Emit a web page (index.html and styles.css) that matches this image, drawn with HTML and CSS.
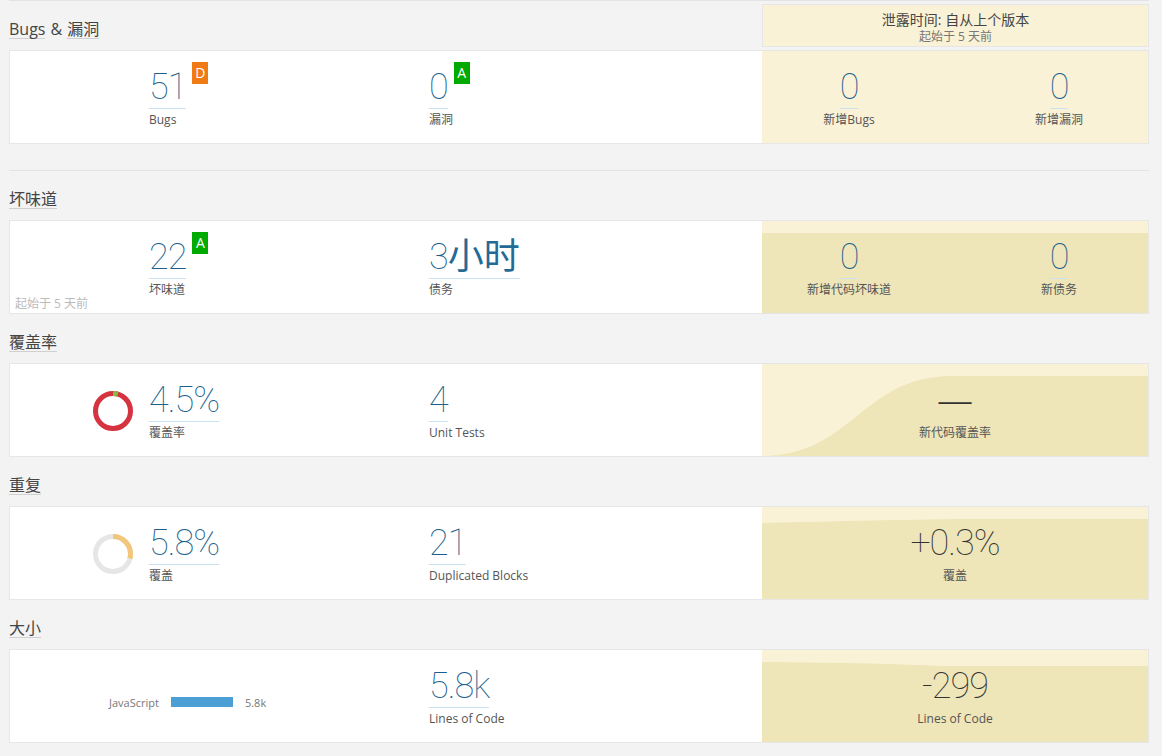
FILE: index.html
```html
<!DOCTYPE html>
<html lang="zh">
<head>
<meta charset="utf-8">
<title>Overview</title>
<link rel="stylesheet" href="styles.css">
</head>
<body>
<div class="page">

  <section class="domain">
    <div class="domain-header">
      <h2 class="domain-title"><a class="title-link">Bugs</a><span class="amp">&amp;</span><a class="title-link">漏洞</a></h2>
      <div class="leak-period">
        <div class="leak-title">泄露时间: 自从上个版本</div>
        <div class="leak-date">起始于 5 天前</div>
      </div>
    </div>
    <div class="card">
      <div class="card-main">
        <div class="chart-cell"></div>
        <div class="measure">
          <div class="value-row"><a class="value">51</a><span class="rating rating-d">D</span></div>
          <div class="label">Bugs</div>
        </div>
        <div class="measure">
          <div class="value-row"><a class="value">0</a><span class="rating rating-a">A</span></div>
          <div class="label">漏洞</div>
        </div>
      </div>
      <div class="card-leak">
        <div class="measure">
          <a class="value">0</a>
          <div class="label">新增Bugs</div>
        </div>
        <div class="measure">
          <a class="value">0</a>
          <div class="label">新增漏洞</div>
        </div>
      </div>
    </div>
  </section>

  <hr class="divider">

  <section class="domain">
    <h2 class="domain-title"><a class="title-link">坏味道</a></h2>
    <div class="card">
      <div class="card-main">
        <div class="chart-cell"></div>
        <div class="measure">
          <div class="value-row"><a class="value">22</a><span class="rating rating-a">A</span></div>
          <div class="label">坏味道</div>
        </div>
        <div class="measure">
          <div class="value-row"><a class="value">3<span class="cjk">小时</span></a></div>
          <div class="label">债务</div>
        </div>
      </div>
      <div class="card-leak">
        <svg class="leak-bg" viewBox="0 0 386 92" preserveAspectRatio="none"><path d="M0 12H386V92H0Z" fill="#eee5b9"/></svg>
        <div class="measure">
          <a class="value">0</a>
          <div class="label">新增代码坏味道</div>
        </div>
        <div class="measure">
          <a class="value">0</a>
          <div class="label">新债务</div>
        </div>
      </div>
      <div class="card-note">起始于 5 天前</div>
    </div>
  </section>

  <section class="domain spaced">
    <h2 class="domain-title"><a class="title-link">覆盖率</a></h2>
    <div class="card">
      <div class="card-main">
        <div class="chart-cell">
          <svg width="40" height="40" viewBox="0 0 40 40"><circle cx="20" cy="20" r="17.5" fill="none" stroke="#d4333f" stroke-width="5"/><circle cx="20" cy="20" r="17.5" fill="none" stroke="#85bb43" stroke-width="5" stroke-dasharray="4.95 110" transform="rotate(-90 20 20)"/></svg>
        </div>
        <div class="measure">
          <div class="value-row"><a class="value">4.5%</a></div>
          <div class="label">覆盖率</div>
        </div>
        <div class="measure">
          <div class="value-row"><a class="value">4</a></div>
          <div class="label">Unit Tests</div>
        </div>
      </div>
      <div class="card-leak single">
        <svg class="leak-bg" viewBox="0 0 386 92" preserveAspectRatio="none"><path d="M0 92C90 92 100 12 190 12H386V92Z" fill="#eee5b9"/></svg>
        <div class="measure">
          <span class="value plain dash">—</span>
          <div class="label">新代码覆盖率</div>
        </div>
      </div>
    </div>
  </section>

  <section class="domain spaced">
    <h2 class="domain-title"><a class="title-link">重复</a></h2>
    <div class="card">
      <div class="card-main">
        <div class="chart-cell">
          <svg width="40" height="40" viewBox="0 0 40 40"><circle cx="20" cy="20" r="17.5" fill="none" stroke="#e6e6e6" stroke-width="5"/><circle cx="20" cy="20" r="17.5" fill="none" stroke="#f2c77c" stroke-width="5" stroke-dasharray="31.9 110" transform="rotate(-90 20 20)"/></svg>
        </div>
        <div class="measure">
          <div class="value-row"><a class="value">5.8%</a></div>
          <div class="label">覆盖</div>
        </div>
        <div class="measure">
          <div class="value-row"><a class="value">21</a></div>
          <div class="label">Duplicated Blocks</div>
        </div>
      </div>
      <div class="card-leak single">
        <svg class="leak-bg" viewBox="0 0 386 92" preserveAspectRatio="none"><path d="M0 16Q120 13 200 12H386V92H0Z" fill="#eee5b9"/></svg>
        <div class="measure">
          <span class="value plain">+0.3%</span>
          <div class="label">覆盖</div>
        </div>
      </div>
    </div>
  </section>

  <section class="domain spaced">
    <h2 class="domain-title"><a class="title-link">大小</a></h2>
    <div class="card">
      <div class="card-main">
        <div class="lang-cell">
          <span class="lang-name">JavaScript</span>
          <span class="lang-bar" style="width:62px"></span>
          <span class="lang-value">5.8k</span>
        </div>
        <div class="measure">
          <div class="value-row"><a class="value">5.8k</a></div>
          <div class="label">Lines of Code</div>
        </div>
      </div>
      <div class="card-leak single">
        <svg class="leak-bg" viewBox="0 0 386 92" preserveAspectRatio="none"><path d="M0 12Q120 13 180 16H386V92H0Z" fill="#eee5b9"/></svg>
        <div class="measure">
          <span class="value plain">-299</span>
          <div class="label">Lines of Code</div>
        </div>
      </div>
    </div>
  </section>

</div>
</body>
</html>
```
FILE: styles.css
```css
* {
  box-sizing: border-box;
}

html,
body {
  margin: 0;
  padding: 0;
}

body {
  background: #f3f3f3;
  font-family: "Open Sans", "Noto Sans CJK SC", sans-serif;
  font-size: 12px;
  color: #444;
}

.page {
  width: 1140px;
  margin-left: 9px;
  border-top: 1px solid #e3e3e3;
}

.domain.spaced {
  margin-top: 19px;
}

.domain-header {
  display: flex;
  justify-content: space-between;
  align-items: flex-start;
  height: 49px;
}

.domain-header .domain-title {
  margin-top: 19px;
}

.domain-title {
  display: flex;
  align-items: flex-start;
  margin: 0 0 11px;
  font-size: 16px;
  font-weight: 400;
  line-height: 18px;
  color: #444;
}

.title-link {
  display: block;
  color: #444;
  text-decoration: none;
  border-bottom: 1px solid #d0d0d0;
}

.amp {
  padding: 0 5px;
}

.leak-period {
  width: 387px;
  height: 43px;
  margin-top: 3px;
  padding-top: 6px;
  border: 1px solid #e6e6e6;
  background: #faf2d6;
  text-align: center;
}

.leak-title {
  font-size: 14px;
  line-height: 17px;
  color: #444;
}

.leak-date {
  font-size: 12px;
  line-height: 17px;
  color: #777;
}

.divider {
  height: 0;
  margin: 26px 0 19px;
  border: 0;
  border-top: 1px solid #e3e3e3;
}

.card {
  position: relative;
  display: flex;
  height: 94px;
  border: 1px solid #e6e6e6;
  background: #fff;
}

.card-main {
  flex: none;
  width: 752px;
  display: grid;
  grid-template-columns: 139px 280px 1fr;
  padding: 16px 0 15px;
}

.chart-cell {
  display: flex;
  align-items: center;
  justify-content: flex-end;
  padding-right: 16px;
}

.chart-cell svg {
  display: block;
}

.lang-cell {
  grid-column: 1 / 3;
  display: flex;
  align-items: center;
  padding: 11px 0 0 99px;
  font-size: 11px;
  color: #777;
}

.lang-bar {
  display: block;
  height: 10px;
  margin: 0 12px;
  background: #4b9fd5;
}

.measure {
  display: flex;
  flex-direction: column;
  align-items: flex-start;
}

.value-row {
  display: flex;
  align-items: flex-start;
}

.value {
  display: block;
  font-family: Roboto, "Noto Sans CJK SC", sans-serif;
  font-size: 36px;
  font-weight: 100;
  line-height: 36px;
  letter-spacing: -1px;
  color: #1b5f8c;
  text-decoration: none;
  padding-top: 2px;
  padding-bottom: 3px;
  border-bottom: 1px solid #cae3f2;
}

.value .cjk {
  font-weight: 400;
  letter-spacing: 0;
  color: #236a97;
}

.value.plain {
  color: #333;
  border-bottom-color: transparent;
}

.value.dash {
  font-family: "Open Sans", sans-serif;
  font-weight: 300;
  letter-spacing: 0;
}

.label {
  margin-top: 3px;
  font-size: 12px;
  line-height: 16px;
  color: #555;
}

.rating {
  display: block;
  width: 16px;
  height: 22px;
  margin: -5px 0 0 6px;
  font-size: 14px;
  line-height: 22px;
  text-align: center;
  color: #fff;
}

.rating-d {
  background: #f07b14;
}

.rating-a {
  background: #00aa00;
}

.card-leak {
  position: relative;
  flex: 1;
  display: grid;
  grid-template-columns: 174px 174px;
  column-gap: 36px;
  padding: 16px 0 15px;
  background: #faf2d6;
}

.card-leak.single {
  grid-template-columns: 1fr;
}

.leak-bg {
  position: absolute;
  top: 0;
  left: 0;
  width: 100%;
  height: 100%;
  display: block;
}

.card-leak .measure {
  position: relative;
  align-items: center;
}

.card-note {
  position: absolute;
  left: 5px;
  bottom: 1px;
  font-size: 12px;
  line-height: 16px;
  color: #bbb;
}
```
